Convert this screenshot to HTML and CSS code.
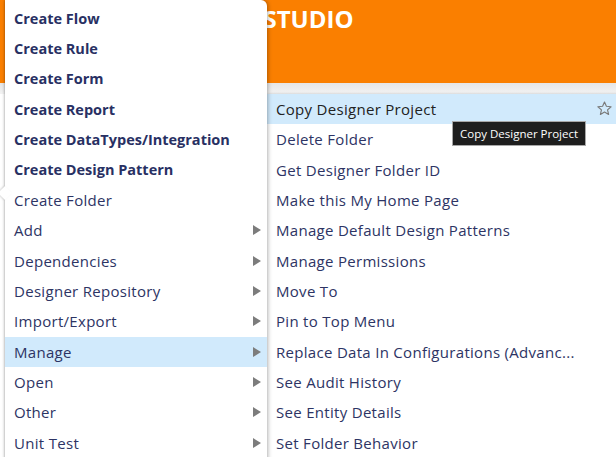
FILE: index.html
```html
<!DOCTYPE html>
<html>
<head>
<meta charset="utf-8">
<link rel="stylesheet" href="styles.css">
</head>
<body>
<div class="page">
  <header class="topbar">
    <div class="brand">DESIGN STUDIO</div>
  </header>
  <div class="band"></div>
  <div class="content"></div>
</div>

<nav class="menu main-menu">
  <span class="notch"></span>
  <div class="item bold">Create Flow</div>
  <div class="item bold">Create Rule</div>
  <div class="item bold">Create Form</div>
  <div class="item bold">Create Report</div>
  <div class="item bold">Create DataTypes/Integration</div>
  <div class="item bold">Create Design Pattern</div>
  <div class="item">Create Folder</div>
  <div class="item sub">Add</div>
  <div class="item sub">Dependencies</div>
  <div class="item sub">Designer Repository</div>
  <div class="item sub">Import/Export</div>
  <div class="item sub active">Manage</div>
  <div class="item sub">Open</div>
  <div class="item sub">Other</div>
  <div class="item sub">Unit Test</div>
</nav>

<nav class="menu sub-menu">
  <div class="item hover">Copy Designer Project
    <svg class="star" viewBox="0 0 24 24" width="17" height="17"><path d="M12 2.8l2.7 6.1 6.6.6-5 4.4 1.5 6.5L12 17l-5.8 3.4 1.5-6.5-5-4.4 6.6-.6z" fill="none" stroke="#7a7a7a" stroke-width="1.6" stroke-linejoin="round"/></svg>
  </div>
  <div class="item">Delete Folder</div>
  <div class="item">Get Designer Folder ID</div>
  <div class="item">Make this My Home Page</div>
  <div class="item">Manage Default Design Patterns</div>
  <div class="item">Manage Permissions</div>
  <div class="item">Move To</div>
  <div class="item">Pin to Top Menu</div>
  <div class="item">Replace Data In Configurations (Advanc...</div>
  <div class="item">See Audit History</div>
  <div class="item">See Entity Details</div>
  <div class="item">Set Folder Behavior</div>
</nav>

<div class="tooltip">Copy Designer Project</div>
</body>
</html>
```
FILE: styles.css
```css
html, body {
  margin: 0;
  padding: 0;
}
body {
  width: 616px;
  height: 457px;
  overflow: hidden;
  background: #f0f0f0;
  font-family: "Open Sans", "Lato", sans-serif;
  position: relative;
}
.page {
  display: flex;
  flex-direction: column;
  height: 100%;
}
.topbar {
  height: 83px;
  background: #fa7f00;
  display: flex;
  align-items: flex-start;
}
.brand {
  color: #fff;
  font-weight: 700;
  font-size: 24px;
  line-height: 24px;
  margin: 7px 0 0 168px;
}
.band {
  height: 11px;
  background: linear-gradient(#e6e6e6, #f3f3f3);
}
.content {
  flex: 1;
  background: #fff;
}

.menu {
  position: absolute;
  background: #fff;
  box-sizing: border-box;
}
.item {
  height: 30.33px;
  display: flex;
  align-items: center;
  padding-left: 9px;
  font-size: 15px;
  letter-spacing: 0.3px;
  color: #2d3464;
  white-space: nowrap;
  position: relative;
}
.item.bold {
  font-weight: 700;
  font-size: 14.5px;
  letter-spacing: 0;
  color: #283063;
}
.item.sub::after {
  content: "";
  position: absolute;
  right: 6px;
  top: 50%;
  margin-top: -5px;
  border-left: 8px solid #7c7c7c;
  border-top: 5px solid transparent;
  border-bottom: 5px solid transparent;
}
.item.active, .item.hover {
  background: #d1eafc;
}
.item.hover {
  color: #222;
}

.main-menu {
  left: 5px;
  top: 0;
  width: 262px;
  height: 470px;
  padding-top: 3px;
  border-radius: 0 6px 0 0;
  box-shadow: 1px 0 4px rgba(0,0,0,0.3), -1px 0 2px rgba(0,0,0,0.15);
  z-index: 3;
}
.notch {
  position: absolute;
  left: -5px;
  top: 188px;
  width: 10px;
  height: 10px;
  background: #fff;
  transform: rotate(45deg);
  box-shadow: -1px 1px 2px rgba(0,0,0,0.15);
}
.sub-menu {
  left: 267px;
  top: 94px;
  width: 360px;
  height: 380px;
  border-radius: 4px 0 0 0;
  box-shadow: -1px 0 3px rgba(0,0,0,0.2);
  z-index: 2;
}
.star {
  position: absolute;
  left: 329px;
  top: 6px;
}
.tooltip {
  position: absolute;
  left: 452px;
  top: 121px;
  height: 25px;
  box-sizing: border-box;
  padding: 0 7px;
  display: flex;
  align-items: center;
  background: #1e1e1e;
  border: 1px solid #a8a8a8;
  color: #fff;
  font-family: "Open Sans", sans-serif;
  font-size: 11.5px;
  z-index: 5;
}
```
